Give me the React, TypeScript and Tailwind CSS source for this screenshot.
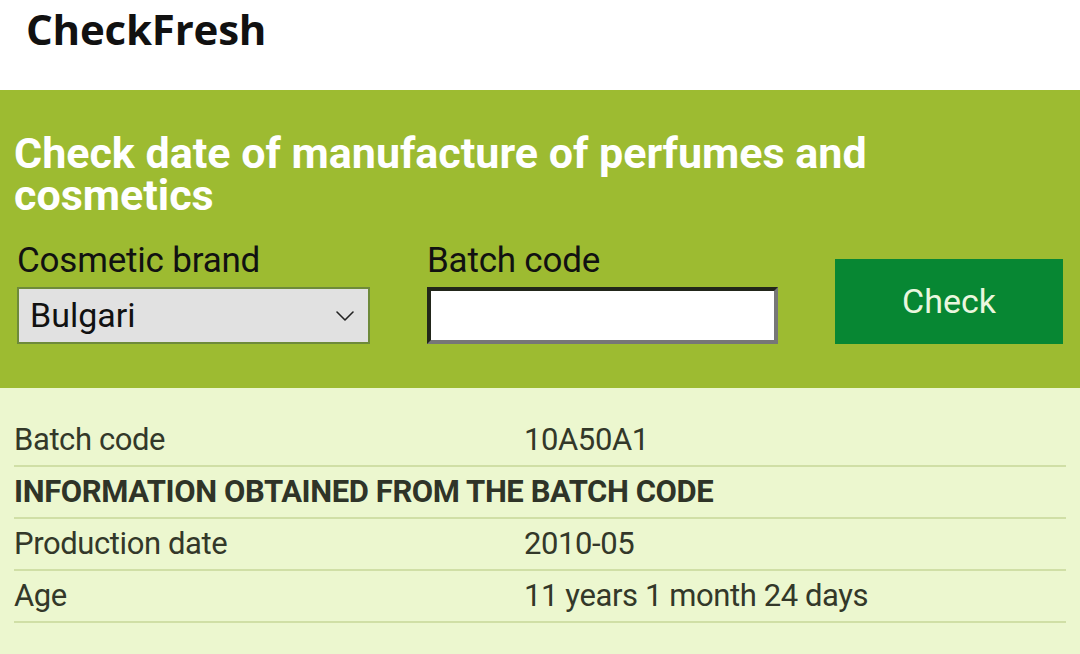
import { ChevronDown } from 'lucide-react';

export default function App() {
  const rows = [
    { label: 'Batch code', value: '10A50A1' },
    { label: 'INFORMATION OBTAINED FROM THE BATCH CODE', head: true },
    { label: 'Production date', value: '2010-05' },
    { label: 'Age', value: '11 years 1 month 24 days' },
  ];

  return (
    <div className="w-[1080px] h-[654px] overflow-hidden bg-[#ecf7cf]" style={{ fontFamily: 'Roboto, "Liberation Sans", sans-serif' }}>
      <header className="h-[90px] bg-white pl-[26px] pt-[1px]">
        <div className="text-[42px] font-bold text-[#111] tracking-[-0.2px] leading-[56px]" style={{ fontFamily: '"Open Sans", Lato, sans-serif' }}>
          CheckFresh
        </div>
      </header>

      <section className="h-[298px] bg-[#9dbb31] px-[14px] pt-[42px]">
        <h1 className="text-[43px] font-bold text-white leading-[42px]">
          Check date of manufacture of perfumes and
          <br />
          cosmetics
        </h1>

        <div className="flex items-end mt-[25px]">
          <div className="w-[353px] ml-[3px]">
            <div className="text-[35px] leading-[40px] text-[#111] tracking-[-0.2px] mb-[6px]">Cosmetic brand</div>
            <div className="h-[57px] bg-[#e1e1e1] border-2 border-[#6e8a3a] flex items-center justify-between pl-[11px] pr-[7px]">
              <span className="text-[34px] text-[#111]">Bulgari</span>
              <ChevronDown className="w-[32px] h-[32px] text-[#222]" strokeWidth={1.2} />
            </div>
          </div>

          <div className="w-[351px] ml-[57px]">
            <div className="text-[35px] leading-[40px] text-[#111] tracking-[-0.2px] mb-[6px]">Batch code</div>
            <div className="h-[57px] bg-white border-[4px] border-t-[#22261a] border-l-[#22261a] border-b-[#777] border-r-[#777]" />
          </div>

          <button className="w-[228px] h-[85px] ml-[57px] bg-[#078733] text-[#eaf7df] text-[34px]">Check</button>
        </div>
      </section>

      <section className="px-[14px] pt-[27px]">
        {rows.map((r) => (
          <div key={r.label} className="flex items-center h-[52px] border-b-2 border-[#d0dfa6] text-[31px] tracking-[-0.4px] text-[#333829]">
            {r.head ? (
              <span className="font-bold text-[#2f3428]">{r.label}</span>
            ) : (
              <>
                <span className="w-[510px]">{r.label}</span>
                <span>{r.value}</span>
              </>
            )}
          </div>
        ))}
      </section>
    </div>
  );
}
